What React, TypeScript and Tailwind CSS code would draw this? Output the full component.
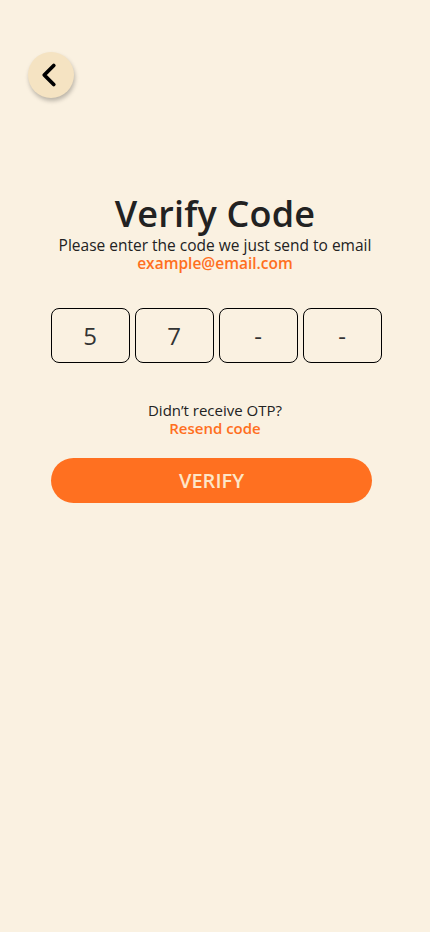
import { ChevronLeft } from "lucide-react";

const digits = ["5", "7", "-", "-"];

export default function App() {
  return (
    <div className="min-h-[932px] w-full bg-[#faf1e1] font-['Open_Sans',sans-serif] text-[#222]">
      <div className="px-7 pt-[52px]">
        <button className="flex h-[46px] w-[46px] items-center justify-center rounded-full bg-[#f5e3c2] shadow-[1px_3px_4px_rgba(0,0,0,0.25)]">
          <ChevronLeft size={38} strokeWidth={2.4} className="-ml-1 text-black" />
        </button>
      </div>

      <div className="mt-[96px] flex flex-col items-center">
        <h1 className="text-[36px] font-semibold leading-[40px] tracking-[0.2px]">Verify Code</h1>
        <p className="mt-[2px] text-[15.5px] leading-[18px]">
          Please enter the code we just send to email
        </p>
        <p className="text-[15.5px] font-semibold leading-[18px] text-[#ff6f1e]">
          example@email.com
        </p>
      </div>

      <div className="mt-[36px] flex justify-center gap-[5px] pl-[2px]">
        {digits.map((d, i) => (
          <div
            key={i}
            className="flex h-[55px] w-[79px] items-center justify-center rounded-[8px] border border-black text-[24px] text-[#333]"
          >
            {d}
          </div>
        ))}
      </div>

      <div className="mt-[38px] flex flex-col items-center text-[15px] leading-[18px]">
        <p>Didn’t receive OTP?</p>
        <button className="font-semibold text-[#ff6f1e]">Resend code</button>
      </div>

      <div className="mt-[21px] px-[51px]">
        <button className="h-[45px] w-[321px] rounded-full bg-[#ff7020] text-[20px] font-semibold text-[#fde6c8]">
          VERIFY
        </button>
      </div>
    </div>
  );
}
